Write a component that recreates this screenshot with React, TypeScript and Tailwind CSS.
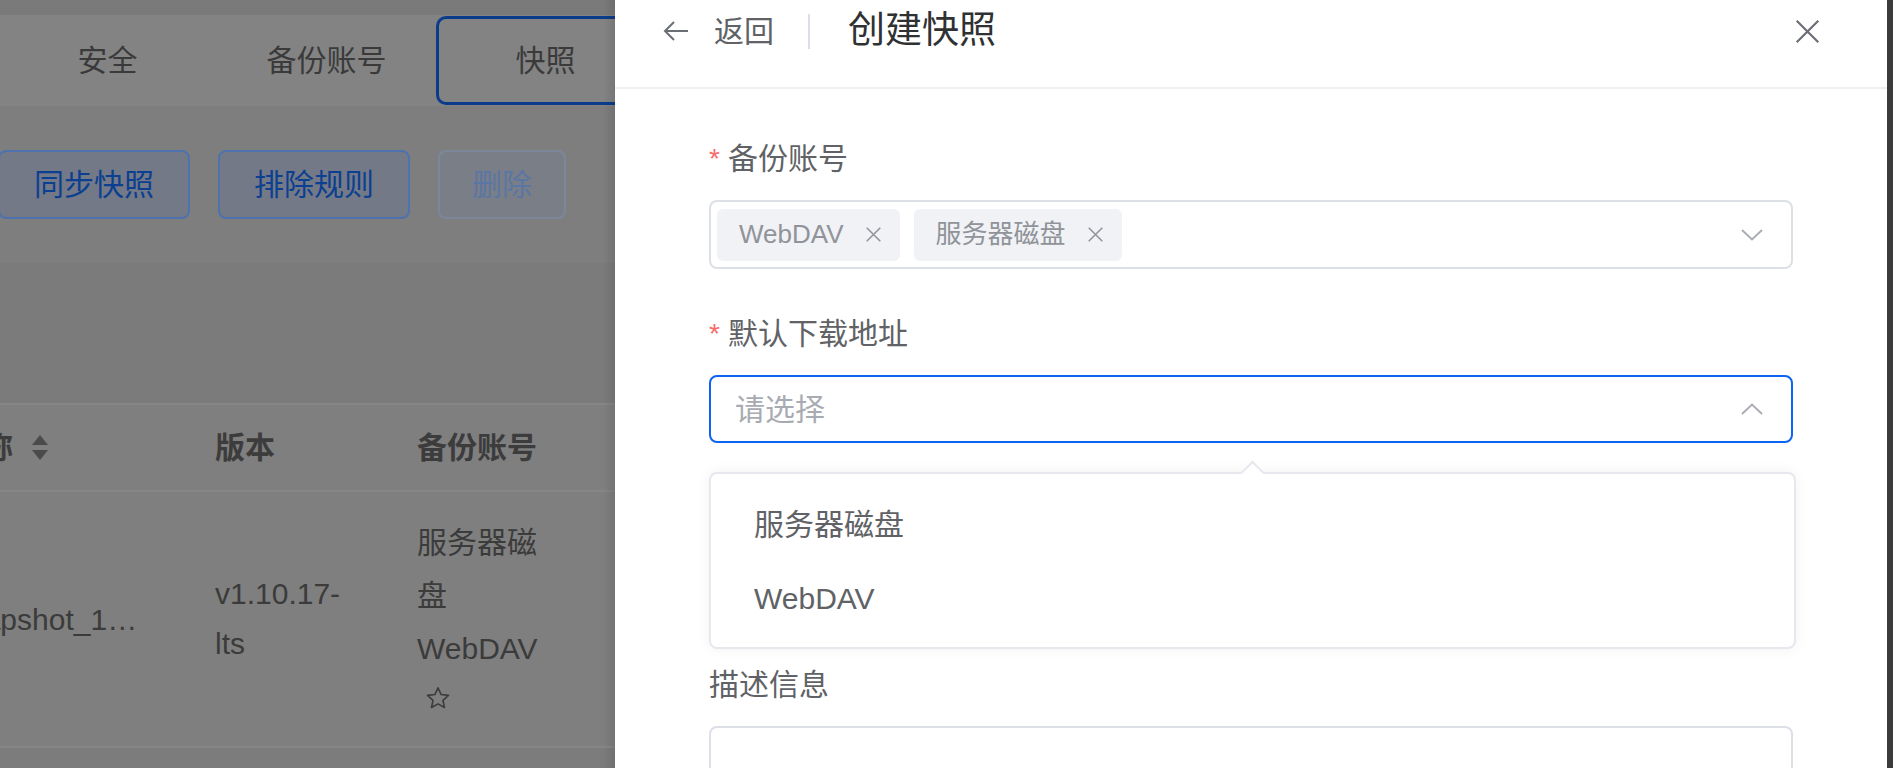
import React from "react";

const font = "font-['Liberation_Sans','Noto_Sans_CJK_SC',sans-serif]";

function Chevron({ up = false }: { up?: boolean }) {
  return (
    <svg width="22" height="12" viewBox="0 0 22 12" fill="none" className="shrink-0">
      <path
        d={up ? "M1 11L11 1.5L21 11" : "M1 1L11 10.5L21 1"}
        stroke="#a8abb2"
        strokeWidth="1.8"
      />
    </svg>
  );
}

function SmallX({ size = 17, color = "#909399", stroke = 1.8 }: { size?: number; color?: string; stroke?: number }) {
  return (
    <svg width={size} height={size} viewBox="0 0 20 20" fill="none" className="shrink-0">
      <path d="M2 2L18 18M18 2L2 18" stroke={color} strokeWidth={stroke} />
    </svg>
  );
}

function Tag({ label }: { label: string }) {
  return (
    <span className="flex h-[52px] items-center rounded-[6px] bg-[#f0f2f5] pl-[22px] pr-[18px] text-[26px] text-[#909399]">
      {label}
      <span className="ml-[21px] flex">
        <SmallX />
      </span>
    </span>
  );
}

function Label({ text, required = false }: { text: string; required?: boolean }) {
  return (
    <div className="flex h-[40px] items-center text-[30px] leading-[40px] text-[#606266]">
      {required && <span className="mr-[8px] text-[28px] text-[#f56c6c]">*</span>}
      {text}
    </div>
  );
}

function LeftPage() {
  return (
    <div className="relative h-[768px] w-[615px] shrink-0 overflow-hidden bg-[#7c7c7c] text-[#3a3a3a]">
      <div className="h-[15px] bg-[#7a7a7a]" />
      {/* tabs */}
      <div className="ml-[-2px] flex h-[91px] whitespace-nowrap bg-[#838383] py-[1px]">
        <div className="flex w-[219px] shrink-0 items-center justify-center text-[30px]">安全</div>
        <div className="flex w-[219px] shrink-0 items-center justify-center text-[30px]">备份账号</div>
        <div className="flex w-[219px] shrink-0 items-center justify-center rounded-[10px] border-[3px] border-[#0b3c8c] text-[30px]">
          快照
        </div>
      </div>
      {/* toolbar */}
      <div className="ml-[-2px] flex h-[157px] items-center gap-[28px] whitespace-nowrap bg-[#7e7e7e]">
        <button className="flex h-[69px] items-center rounded-[8px] border-2 border-[#4d72ad] bg-[#737986] px-[34px] text-[30px] text-[#0b3f91]">
          同步快照
        </button>
        <button className="flex h-[69px] items-center rounded-[8px] border-2 border-[#4d72ad] bg-[#737986] px-[34px] text-[30px] text-[#0b3f91]">
          排除规则
        </button>
        <button className="flex h-[69px] items-center rounded-[8px] border-2 border-[#7c879c] bg-[#7a7e87] px-[32px] text-[30px] text-[#5a76a4]">
          删除
        </button>
      </div>
      <div className="h-[140px] bg-[#7b7b7b]" />
      {/* table header */}
      <div className="ml-[-47px] flex h-[89px] items-center whitespace-nowrap border-y-2 border-[#868686] bg-[#7f7f7f] text-[30px] font-bold text-[#3c3c3c]">
        <div className="flex w-[262px] shrink-0 items-center">
          名称
          <svg width="20" height="27" viewBox="0 0 20 27" className="ml-[17px]">
            <path d="M10 1L18 11H2Z" fill="#4b4b4b" />
            <path d="M10 26L18 16H2Z" fill="#4b4b4b" />
          </svg>
        </div>
        <div className="w-[202px] shrink-0">版本</div>
        <div className="shrink-0">备份账号</div>
      </div>
      {/* table row */}
      <div className="ml-[-48px] flex h-[256px] items-center border-b-2 border-[#868686] bg-[#7f7f7f] text-[30px] text-[#3b3b3b]">
        <div className="w-[263px] shrink-0 whitespace-nowrap">snapshot_1…</div>
        <div className="w-[202px] shrink-0">
          <div className="w-[150px] leading-[50px]">v1.10.17-lts</div>
        </div>
        <div className="w-[132px] shrink-0">
          <div className="leading-[53px]">服务器磁盘</div>
          <div className="leading-[53px]">WebDAV</div>
          <div className="flex h-[48px] items-center pl-[7px]">
            <svg width="28" height="27" viewBox="0 0 24 24" fill="none">
              <path
                d="M12 2.5l2.8 6 6.5.7-4.9 4.4 1.4 6.4L12 16.8 6.2 20l1.4-6.4L2.7 9.2l6.5-.7L12 2.5z"
                stroke="#3b3b3b"
                strokeWidth="1.4"
                strokeLinejoin="round"
              />
            </svg>
          </div>
        </div>
      </div>
      <div className="pointer-events-none absolute right-0 top-0 h-full w-[12px] bg-gradient-to-r from-transparent to-black/10" />
    </div>
  );
}

function Drawer() {
  return (
    <div className="h-[768px] w-[1272px] shrink-0 overflow-hidden bg-white">
      <div className="h-[89px] border-b-2 border-[#eef0f3]">
        <div className="flex h-[62px] items-center whitespace-nowrap pl-[48px] pr-[66px]">
          <svg width="26" height="22" viewBox="0 0 26 22" fill="none" className="shrink-0">
            <path d="M25 11H2M11 2L2 11L11 20" stroke="#6b6e75" strokeWidth="2" />
          </svg>
          <span className="ml-[25px] text-[30px] text-[#606266]">返回</span>
          <span className="ml-[34px] h-[35px] w-[2px] bg-[#dcdfe6]" />
          <span className="ml-[38px] text-[37px] text-[#303133]">创建快照</span>
          <span className="ml-auto flex">
            <SmallX size={27} color="#6b6e75" stroke={1.6} />
          </span>
        </div>
      </div>

      <div className="px-[94px] pt-[50px]">
        <Label text="备份账号" required />
        <div className="mt-[21px] flex h-[69px] items-center gap-[14px] rounded-[8px] border-2 border-[#dcdfe6] pl-[6px] pr-[28px]">
          <Tag label="WebDAV" />
          <Tag label="服务器磁盘" />
          <span className="ml-auto flex">
            <Chevron />
          </span>
        </div>

        <div className="mt-[45px]">
          <Label text="默认下载地址" required />
        </div>
        <div className="relative mt-[21px]">
          <div className="flex h-[68px] items-center rounded-[8px] border-2 border-[#0d63f2] pl-[24px] pr-[28px]">
            <span className="text-[30px] text-[#a8abb2]">请选择</span>
            <span className="ml-auto flex">
              <Chevron up />
            </span>
          </div>
          <div className="absolute left-0 top-[97px] z-10 h-[177px] w-[1087px] rounded-[8px] border-2 border-[#e6e8ee] bg-white py-[13px] shadow-[0_0_14px_rgba(0,0,0,0.06)]">
            <span className="absolute -top-[10px] left-[533px] h-[17px] w-[17px] rotate-45 border-l-2 border-t-2 border-[#e6e8ee] bg-white" />
            <div className="flex h-[74px] items-center px-[43px] text-[30px] text-[#606266]">服务器磁盘</div>
            <div className="flex h-[74px] items-center px-[43px] text-[30px] text-[#606266]">WebDAV</div>
          </div>
        </div>

        {/* item hidden under the open dropdown */}
        <div className="mt-[45px] h-[177px]" />

        <Label text="描述信息" />
        <div className="mt-[21px] h-[150px] rounded-[8px] border-2 border-[#dcdfe6]" />
      </div>
    </div>
  );
}

export default function App() {
  return (
    <div className={`flex h-[768px] w-[1893px] overflow-hidden ${font}`}>
      <LeftPage />
      <Drawer />
      <div className="h-[768px] w-[6px] shrink-0 bg-[#3b3b3b]" />
    </div>
  );
}
